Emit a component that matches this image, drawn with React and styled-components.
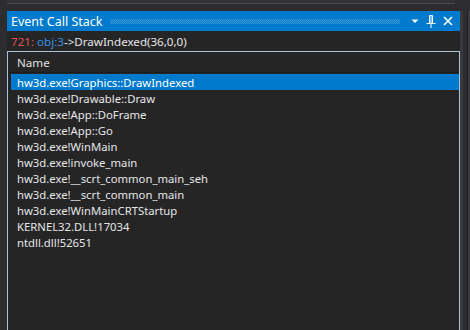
import React from "react";
import styled, { createGlobalStyle } from "styled-components";

const Global = createGlobalStyle`
  html, body { margin: 0; padding: 0; background: #2d2d30; overflow: hidden; }
  body { width: 470px; height: 330px; font-family: "Noto Sans", "Liberation Sans", sans-serif; }
`;

const Page = styled.div`
  width: 470px;
  height: 330px;
  display: flex;
  flex-direction: column;
  background: #2d2d30;
`;

const TopStrip = styled.div`
  height: 11px;
  display: flex;
  padding-left: 7px;
  box-sizing: border-box;
`;

const PrevPanel = styled.div`
  width: 448px;
  height: 3px;
  background: #333337;
  border-bottom: 1px solid #4a4a4f;
`;

const Main = styled.div`
  flex: 1;
  display: flex;
  padding-left: 7px;
  min-height: 0;
`;

const Panel = styled.div`
  width: 453px;
  display: flex;
  flex-direction: column;
  background: #252526;
`;

const SideStrip = styled.div`
  flex: 1;
  display: flex;
`;

const SideLine = styled.div`
  width: ${(p) => p.w}px;
  background: ${(p) => p.c};
`;

const TitleBar = styled.div`
  height: 20px;
  background: #007acc;
  display: flex;
  align-items: center;
  padding: 0 7px 0 4px;
  gap: 7px;
`;

const Title = styled.span`
  color: #ffffff;
  font-size: 12.5px;
  white-space: nowrap;
`;

const Dots = styled.div`
  flex: 1;
  height: 5px;
  margin-top: 1px;
  background: conic-gradient(#3d9ad8 25%, transparent 0 50%, #3d9ad8 0 75%, transparent 0) 0 0 / 2px 2px;
  margin-right: 4px;
`;

const IconBtn = styled.div`
  width: ${(p) => p.w}px;
  height: 14px;
  display: flex;
  align-items: center;
  justify-content: center;
`;

const InfoLine = styled.div`
  height: 20px;
  display: flex;
  align-items: center;
  padding-left: 4px;
  font-size: 11.6px;
  color: #dcdcdc;
  white-space: nowrap;
`;

const Tok = styled.span`
  color: ${(p) => p.c};
`;

const ListBox = styled.div`
  flex: 1;
  border: 1px solid #a9c3dc;
  border-bottom: none;
  display: flex;
  flex-direction: column;
  min-height: 0;
`;

const Header = styled.div`
  height: 20px;
  display: flex;
  align-items: center;
  padding-left: 9px;
  font-size: 11.6px;
  color: #e0e0e0;
  border-bottom: 1px solid #1c1c1c;
`;

const Rows = styled.div`
  display: flex;
  flex-direction: column;
  padding: 1px 0 0 3px;
`;

const Row = styled.div`
  height: 16px;
  display: flex;
  align-items: center;
  padding-left: 6px;
  font-size: 11.3px;
  color: ${(p) => (p.sel ? "#ffffff" : "#e6e6e6")};
  background: ${(p) => (p.sel ? "#007acc" : "transparent")};
  white-space: nowrap;
`;

const frames = [
  "hw3d.exe!Graphics::DrawIndexed",
  "hw3d.exe!Drawable::Draw",
  "hw3d.exe!App::DoFrame",
  "hw3d.exe!App::Go",
  "hw3d.exe!WinMain",
  "hw3d.exe!invoke_main",
  "hw3d.exe!__scrt_common_main_seh",
  "hw3d.exe!__scrt_common_main",
  "hw3d.exe!WinMainCRTStartup",
  "KERNEL32.DLL!17034",
  "ntdll.dll!52651",
];

export default function App() {
  return (
    <Page>
      <Global />
      <TopStrip>
        <PrevPanel />
      </TopStrip>
      <Main>
        <Panel>
          <TitleBar>
            <Title>Event Call Stack</Title>
            <Dots />
            <IconBtn w={8}>
              <svg width="8" height="4" viewBox="0 0 8 4">
                <path d="M0.5 0.5 H7.5 L4 4 Z" fill="#fff" />
              </svg>
            </IconBtn>
            <IconBtn w={10}>
              <svg width="10" height="13" viewBox="0 0 10 13">
                <path d="M3.5 0.5 H6.5 V8.5 M3.5 0.5 V8.5 M0.5 8.5 H9.5 M5 8.5 V13" stroke="#fff" strokeWidth="1" fill="none" />
                <path d="M5 1 V8" stroke="#fff" strokeWidth="1" />
              </svg>
            </IconBtn>
            <IconBtn w={10}>
              <svg width="10" height="10" viewBox="0 0 10 10">
                <path d="M1 1 L9 9 M9 1 L1 9" stroke="#fff" strokeWidth="1.6" />
              </svg>
            </IconBtn>
          </TitleBar>
          <InfoLine>
            <Tok c="#e05252">721:</Tok>
            <Tok c="#3a8fe0">&nbsp;obj:3</Tok>
            <Tok c="#e6e6e6">-&gt;DrawIndexed(36,0,0)</Tok>
          </InfoLine>
          <ListBox>
            <Header>Name</Header>
            <Rows>
              {frames.map((f, i) => (
                <Row key={f} sel={i === 0}>
                  {f}
                </Row>
              ))}
            </Rows>
          </ListBox>
        </Panel>
        <SideStrip>
          <SideLine w={3} c="#3a3a3e" />
          <SideLine w={4} c="#2d2d30" />
          <SideLine w={1} c="#1e1e1e" />
          <SideLine w={2} c="#3e3e42" />
        </SideStrip>
      </Main>
    </Page>
  );
}
